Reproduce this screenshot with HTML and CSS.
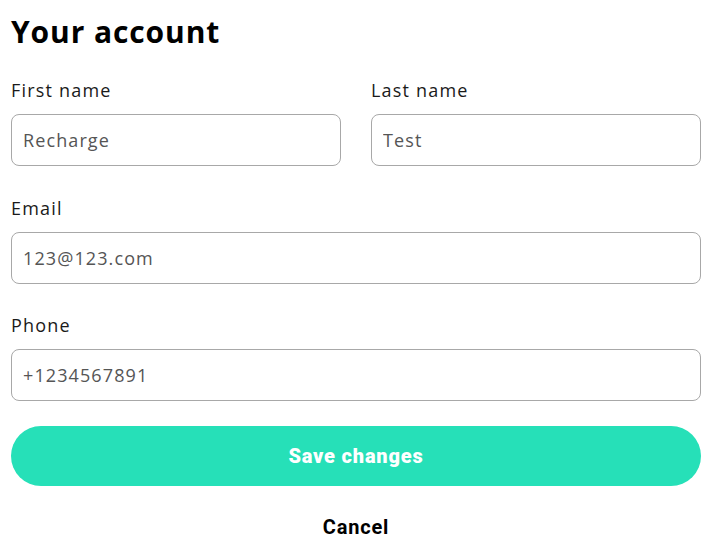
FILE: index.html
```html
<!DOCTYPE html>
<html lang="en">
<head>
<meta charset="utf-8">
<title>Your account</title>
<link rel="stylesheet" href="styles.css">
</head>
<body>
<main class="account">
  <h1 class="title">Your account</h1>
  <form class="form">
    <div class="row two">
      <label class="field">
        <span class="label">First name</span>
        <input class="input" type="text" value="Recharge">
      </label>
      <label class="field">
        <span class="label">Last name</span>
        <input class="input" type="text" value="Test">
      </label>
    </div>
    <label class="field">
      <span class="label">Email</span>
      <input class="input" type="email" value="123@123.com">
    </label>
    <label class="field">
      <span class="label">Phone</span>
      <input class="input" type="tel" value="+1234567891">
    </label>
    <button class="save" type="button">Save changes</button>
    <button class="cancel" type="button">Cancel</button>
  </form>
</main>
</body>
</html>
```

FILE: styles.css
```css
html, body {
  margin: 0;
  padding: 0;
  background: #ffffff;
}
body {
  font-family: "Open Sans", "Liberation Sans", sans-serif;
  color: #111111;
}
.account {
  width: 690px;
  padding: 14px 0 0 11px;
}
.title {
  margin: 0;
  font-size: 30px;
  line-height: 36px;
  font-weight: 700;
  letter-spacing: 0.9px;
  color: #000;
}
.form {
  display: flex;
  flex-direction: column;
  gap: 29.5px;
  margin-top: 28px;
}
.row.two {
  display: grid;
  grid-template-columns: 1fr 1fr;
  column-gap: 30px;
}
.field {
  display: flex;
  flex-direction: column;
  gap: 12px;
}
.label {
  font-size: 18px;
  line-height: 24px;
  letter-spacing: 1.2px;
  color: #1a1a1a;
}
.input {
  box-sizing: border-box;
  height: 52px;
  width: 100%;
  border: 1px solid #a8a8a8;
  border-radius: 8px;
  padding: 0 11px;
  font-family: inherit;
  font-size: 18px;
  letter-spacing: 1.1px;
  color: #555555;
  background: #fff;
  outline: none;
}
.save {
  margin-top: -5px;
  height: 60px;
  border: none;
  border-radius: 30px;
  background: #26e0b8;
  color: #ffffff;
  font-family: "Roboto", "Open Sans", sans-serif;
  font-weight: 900;
  font-size: 20px;
  letter-spacing: 0.8px;
  cursor: pointer;
}
.cancel {
  margin-top: 0;
  align-self: center;
  border: none;
  background: none;
  padding: 0;
  font-family: "Roboto", "Open Sans", sans-serif;
  font-weight: 700;
  font-size: 20px;
  line-height: 24px;
  letter-spacing: 0.8px;
  color: #000;
  cursor: pointer;
}
```
